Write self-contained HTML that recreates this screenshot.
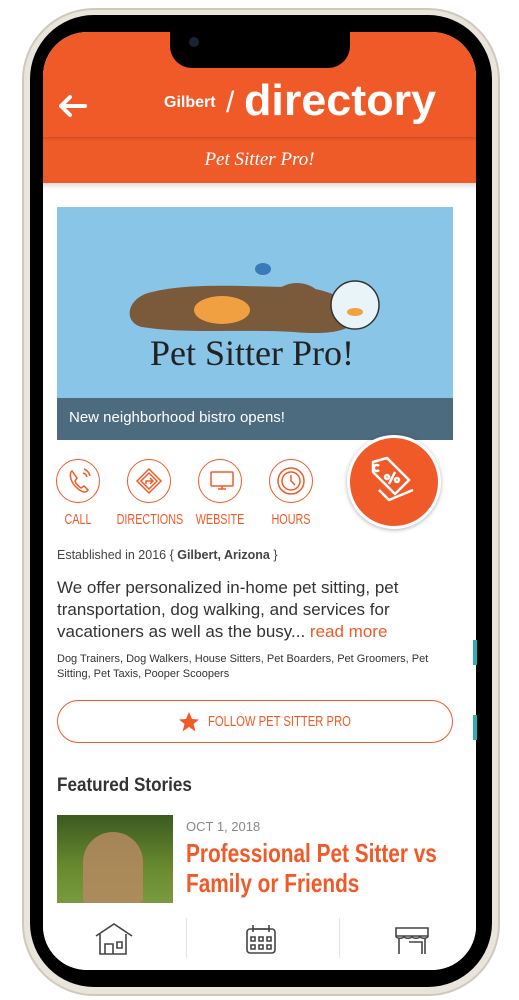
<!DOCTYPE html>
<html><head><meta charset="utf-8"><style>
*{margin:0;padding:0;box-sizing:border-box}
body{width:519px;height:1000px;background:#fff;position:relative;overflow:hidden;font-family:"Liberation Sans",sans-serif}
.abs{position:absolute}
.frame{left:22px;top:8px;width:478px;height:988px;border-radius:72px;background:#e9e4dc;border:2px solid #cfc8bc}
.bezel{left:30px;top:15px;width:462px;height:972px;border-radius:64px;background:#000}
.screen{left:43px;top:32px;width:433px;height:938px;border-radius:44px;background:#fff;overflow:hidden}
.narrow{font-family:"Liberation Sans Narrow","Liberation Sans",sans-serif}
.lbl{color:#f05a28;font-size:15px;top:479px;width:90px;text-align:center;transform:scaleX(.72)}
.circ{width:44px;height:44px;border:1.5px solid #f05a28;border-radius:50%;top:427px}
</style></head><body>
<div class="abs frame"></div>
<div class="abs bezel"></div>
<div class="abs screen">
  <div class="abs" style="left:0;top:0;width:433px;height:105px;background:#f05a28"></div>
  <div class="abs" style="left:0;top:105px;width:433px;height:46px;background:#ef5a29;box-shadow:0 3px 3px -2px rgba(0,0,0,.2) inset"></div>
  <div class="abs" style="left:0;top:151px;width:433px;height:6px;background:linear-gradient(#ddd,#fff)"></div>
  <svg class="abs" style="left:14px;top:62px" width="32" height="24"><path d="M28 12H4M13 3L4 12l9 9" stroke="#fff" stroke-width="4" fill="none" stroke-linecap="round" stroke-linejoin="round"/></svg>
  <div class="abs" style="left:121px;top:62px;color:#fff;font-size:16px;font-weight:bold">Gilbert</div>
  <div class="abs" style="left:183px;top:54px;color:#fff;font-size:30px">/</div>
  <div class="abs" style="left:201px;top:44px;color:#fff;font-size:44px;font-weight:bold;transform:scaleX(1.02);transform-origin:left">directory</div>
  <div class="abs" style="left:0;top:117px;width:433px;text-align:center;color:#fff;font-size:19px;font-family:'Liberation Serif',serif;font-style:italic">Pet Sitter Pro!</div>
  <div class="abs" style="left:127px;top:0;width:180px;height:36px;background:#000;border-radius:0 0 22px 22px"></div>
  <div class="abs" style="left:146px;top:5px;width:10px;height:10px;border-radius:50%;background:#1a2330"></div>
  <div class="abs" style="left:14px;top:175px;width:396px;height:233px;background:#88c5e6"></div>
  <svg class="abs" style="left:14px;top:175px" width="396" height="191">
    <path d="M85 120c-20-5-15-30 10-35 40-10 100-5 140-5 30 0 60 10 62 30 2 15-30 18-60 15-50-3-110 2-152-5z" fill="#7a5a3a"/>
    <ellipse cx="240" cy="100" rx="28" ry="24" fill="#7a5a3a"/>
    <ellipse cx="165" cy="103" rx="28" ry="14" fill="#f0a040"/>
    <circle cx="298" cy="98" r="24" fill="#e8f4f8" stroke="#333" stroke-width="1.5"/>
    <ellipse cx="298" cy="105" rx="8" ry="4" fill="#f0a040"/>
    <ellipse cx="206" cy="62" rx="8" ry="6" fill="#3a7ab8"/>
    <text x="195" y="158" font-family="Liberation Serif,serif" font-size="36" fill="#222" text-anchor="middle">Pet Sitter Pro!</text>
  </svg>
  <div class="abs" style="left:14px;top:366px;width:396px;height:42px;background:#4d6b7e;color:#fff;font-size:15px;padding:11px 12px">New neighborhood bistro opens!</div>
  <div class="abs circ" style="left:13px"></div>
  <div class="abs circ" style="left:84px"></div>
  <div class="abs circ" style="left:155px"></div>
  <div class="abs circ" style="left:226px"></div>
  <svg class="abs" style="left:13px;top:427px" width="300" height="44" fill="none" stroke="#f05a28" stroke-width="1.5">
    <path d="M16 12c-3 2-2 10 4 16s10 6 12 3l-4-4-3 2c-3-2-5-4-6-7l2-3z"/><path d="M27 14a6 6 0 0 1 4 4M28 10a10 10 0 0 1 6 7"/>
    <path d="M93 10l12 12-12 12-12-12zM93 14l8 8-8 8-8-8z"/><path d="M90 25v-3h6M94 19l3 3-3 3"/>
    <rect x="155" y="13" width="22" height="14" rx="1"/><path d="M162 30h8M166 27v3"/>
    <circle cx="235" cy="22" r="13"/><circle cx="235" cy="22" r="9"/><path d="M235 16v6l4 4"/>
  </svg>
  <div class="abs lbl narrow" style="left:-10px">CALL</div>
  <div class="abs lbl narrow" style="left:61px">DIRECTIONS</div>
  <div class="abs lbl narrow" style="left:132px">WEBSITE</div>
  <div class="abs lbl narrow" style="left:203px">HOURS</div>
  <div class="abs" style="left:304px;top:403px;width:94px;height:94px;border-radius:50%;background:#f05a28;border:3px solid #fff;box-shadow:0 1px 4px rgba(0,0,0,.3)"></div>
  <svg class="abs" style="left:322px;top:420px" width="60" height="60" fill="none" stroke="#fff" stroke-width="2.5" stroke-linejoin="round"><path d="M8 10l14-4 22 22-14 14-22-22z"/><path d="M14 38l10 10 24-10"/><circle cx="22" cy="25" r="2"/><circle cx="32" cy="28" r="2"/><path d="M30 20l-6 12"/><path d="M14 14a3 3 0 1 0 0 4"/></svg>
  <div class="abs" style="left:14px;top:516px;font-size:12.5px;color:#444">Established in 2016 { <b>Gilbert, Arizona</b> }</div>
  <div class="abs" style="left:14px;top:545px;width:400px;font-size:17px;line-height:22px;color:#333">We offer personalized in-home pet sitting, pet transportation, dog walking, and services for vacationers as well as the busy... <span style="color:#f05a28">read more</span></div>
  <div class="abs" style="left:14px;top:620px;width:400px;font-size:11px;line-height:15px;color:#333">Dog Trainers, Dog Walkers, House Sitters, Pet Boarders, Pet Groomers, Pet Sitting, Pet Taxis, Pooper Scoopers</div>
  <div class="abs" style="left:14px;top:668px;width:396px;height:43px;border:1.5px solid #f05a28;border-radius:22px"></div>
  <svg class="abs" style="left:135px;top:679px" width="22" height="21"><path d="M11 1l3 7 7 .5-5.5 4.5 2 7.5L11 16l-6.5 4.5 2-7.5L1 8.5 8 8z" fill="#f05a28"/></svg>
  <div class="abs narrow" style="left:165px;top:681px;font-size:15px;color:#f05a28;transform:scaleX(.75);transform-origin:left">FOLLOW PET SITTER PRO</div>
  <div class="abs narrow" style="left:14px;top:743px;font-size:19px;font-weight:bold;color:#333;transform:scaleX(.9);transform-origin:left">Featured Stories</div>
  <div class="abs" style="left:14px;top:783px;width:116px;height:88px;background:linear-gradient(#3a5a20,#6a8a30 60%,#7a9a40)"></div>
  <div class="abs" style="left:40px;top:800px;width:60px;height:71px;background:#b58a60;border-radius:30px 30px 4px 4px;opacity:.85"></div>
  <div class="abs narrow" style="left:143px;top:787px;font-size:13px;color:#888">OCT 1, 2018</div>
  <div class="abs narrow" style="left:143px;top:806px;font-size:26px;line-height:30px;font-weight:bold;color:#f05a28;transform:scaleX(.8);transform-origin:left;width:360px">Professional Pet Sitter vs Family or Friends</div>
  <div class="abs" style="left:0;top:884px;width:433px;height:60px;background:#fff"></div>
  <div class="abs" style="left:143px;top:886px;width:1px;height:40px;background:#e3e3e3"></div>
  <div class="abs" style="left:296px;top:886px;width:1px;height:40px;background:#e3e3e3"></div>
  <svg class="abs" style="left:0;top:888px" width="433" height="40" fill="none" stroke="#444" stroke-width="1.6">
    <path d="M53 16l18-12 18 12M57 14v20h26V14M62 34V24h8v10M74 22h5v6h-5z"/>
    <rect x="204" y="9" width="28" height="24" rx="3"/><path d="M210 5v7M226 5v7M210 9h16"/><path d="M208 17h4v4h-4zM216 17h4v4h-4zM224 17h4v4h-4zM208 25h4v4h-4zM216 25h4v4h-4zM224 25h4v4h-4z"/>
    <path d="M353 8h32v8h-32zM353 16c0 3 8 3 8 0c0 3 8 3 8 0c0 3 8 3 8 0c0 3 8 3 8 0M356 19v15M382 19v15M366 22h13v12"/>
  </svg>
</div>
<div class="abs" style="left:473px;top:640px;width:4px;height:25px;background:#2ab0b0"></div>
<div class="abs" style="left:473px;top:715px;width:4px;height:25px;background:#2ab0b0"></div>
</body></html>
